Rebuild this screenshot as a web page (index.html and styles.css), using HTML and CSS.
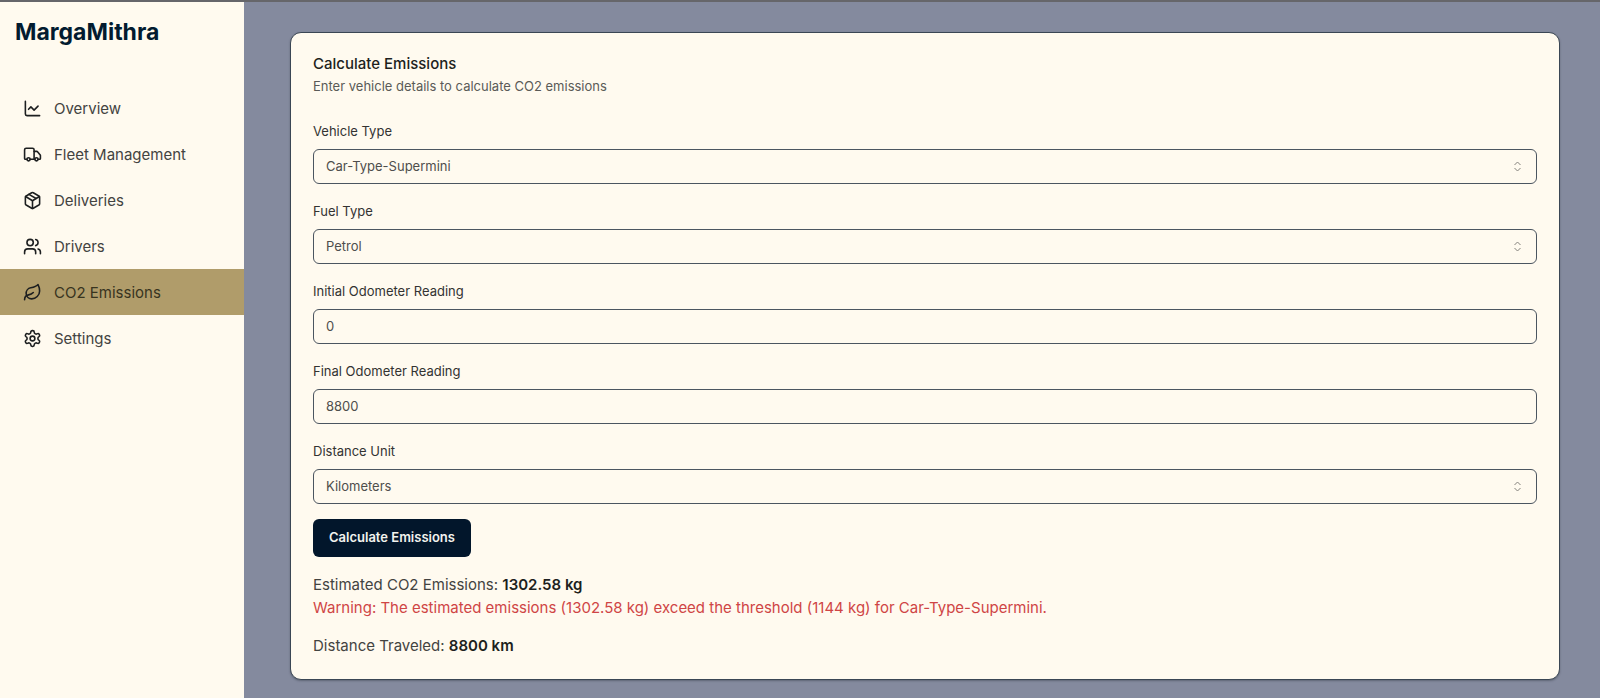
FILE: index.html
```html
<!DOCTYPE html>
<html lang="en">
<head>
<meta charset="utf-8">
<meta name="viewport" content="width=device-width, initial-scale=1">
<title>MargaMithra</title>
<link rel="stylesheet" href="styles.css">
</head>
<body>
<div class="app">
  <aside class="sidebar">
    <h1 class="brand">MargaMithra</h1>
    <nav class="nav" aria-label="Main">
      <a class="nav-link" href="#overview">
        <svg class="icon" viewBox="0 0 24 24" aria-hidden="true"><path d="M3 3v16a2 2 0 0 0 2 2h16"/><path d="m7 13 3-3 4 4 5-5"/></svg>
        Overview
      </a>
      <a class="nav-link" href="#fleet">
        <svg class="icon" viewBox="0 0 24 24" aria-hidden="true"><path d="M14 18V6a2 2 0 0 0-2-2H4a2 2 0 0 0-2 2v11a1 1 0 0 0 1 1h2"/><path d="M15 18H9"/><path d="M19 18h2a1 1 0 0 0 1-1v-3.650a1 1 0 0 0-.22-.624l-3.480-4.350A1 1 0 0 0 17.520 8H14"/><circle cx="17" cy="18" r="2"/><circle cx="7" cy="18" r="2"/></svg>
        Fleet Management
      </a>
      <a class="nav-link" href="#deliveries">
        <svg class="icon" viewBox="0 0 24 24" aria-hidden="true"><path d="M11 21.730a2 2 0 0 0 2 0l7-4A2 2 0 0 0 21 16V8a2 2 0 0 0-1-1.730l-7-4a2 2 0 0 0-2 0l-7 4A2 2 0 0 0 3 8v8a2 2 0 0 0 1 1.730z"/><path d="M12 22V12"/><path d="m3.300 7 7.703 4.734a2 2 0 0 0 1.994 0L20.700 7"/><path d="m7.500 4.270 9 5.150"/></svg>
        Deliveries
      </a>
      <a class="nav-link" href="#drivers">
        <svg class="icon" viewBox="0 0 24 24" aria-hidden="true"><path d="M16 21v-2a4 4 0 0 0-4-4H6a4 4 0 0 0-4 4v2"/><circle cx="9" cy="7" r="4"/><path d="M22 21v-2a4 4 0 0 0-3-3.870"/><path d="M16 3.130a4 4 0 0 1 0 7.750"/></svg>
        Drivers
      </a>
      <a class="nav-link nav-link-active" href="#emissions" aria-current="page">
        <svg class="icon" viewBox="0 0 24 24" aria-hidden="true"><path d="M11 20A7 7 0 0 1 9.800 6.100C15.500 5 17 4.480 19 2c1 2 2 4.180 2 8 0 5.500-4.780 10-10 10Z"/><path d="M2 21c0-3 1.850-5.360 5.080-6C9.500 14.520 12 13 13 12"/></svg>
        CO2 Emissions
      </a>
      <a class="nav-link" href="#settings">
        <svg class="icon" viewBox="0 0 24 24" aria-hidden="true"><path d="M12.220 2h-.44a2 2 0 0 0-2 2v.18a2 2 0 0 1-1 1.730l-.43.25a2 2 0 0 1-2 0l-.15-.08a2 2 0 0 0-2.730.73l-.22.38a2 2 0 0 0 .73 2.730l.15.1a2 2 0 0 1 1 1.720v.51a2 2 0 0 1-1 1.740l-.15.09a2 2 0 0 0-.73 2.730l.22.38a2 2 0 0 0 2.730.73l.15-.08a2 2 0 0 1 2 0l.43.25a2 2 0 0 1 1 1.730V20a2 2 0 0 0 2 2h.44a2 2 0 0 0 2-2v-.18a2 2 0 0 1 1-1.730l.43-.25a2 2 0 0 1 2 0l.15.08a2 2 0 0 0 2.730-.73l.22-.39a2 2 0 0 0-.73-2.730l-.15-.08a2 2 0 0 1-1-1.740v-.5a2 2 0 0 1 1-1.740l.15-.09a2 2 0 0 0 .73-2.730l-.22-.38a2 2 0 0 0-2.730-.73l-.15.08a2 2 0 0 1-2 0l-.43-.25a2 2 0 0 1-1-1.730V4a2 2 0 0 0-2-2z"/><circle cx="12" cy="12" r="3"/></svg>
        Settings
      </a>
    </nav>
  </aside>
  <main class="main">
    <section class="card">
      <header class="card-header">
        <h2 class="card-title">Calculate Emissions</h2>
        <p class="card-subtitle">Enter vehicle details to calculate CO2 emissions</p>
      </header>
      <form class="form">
        <div class="field">
          <label class="label" for="vehicle">Vehicle Type</label>
          <div class="select-box">
            <select class="control" id="vehicle"><option>Car-Type-Supermini</option></select>
            <svg class="caret" viewBox="0 0 15 15" aria-hidden="true"><path d="M4.500 6 7.500 3l3 3M4.500 9l3 3 3-3"/></svg>
          </div>
        </div>
        <div class="field">
          <label class="label" for="fuel">Fuel Type</label>
          <div class="select-box">
            <select class="control" id="fuel"><option>Petrol</option></select>
            <svg class="caret" viewBox="0 0 15 15" aria-hidden="true"><path d="M4.500 6 7.500 3l3 3M4.500 9l3 3 3-3"/></svg>
          </div>
        </div>
        <div class="field">
          <label class="label" for="initial">Initial Odometer Reading</label>
          <input class="control" id="initial" type="text" inputmode="numeric" value="0">
        </div>
        <div class="field">
          <label class="label" for="final">Final Odometer Reading</label>
          <input class="control" id="final" type="text" inputmode="numeric" value="8800">
        </div>
        <div class="field">
          <label class="label" for="unit">Distance Unit</label>
          <div class="select-box">
            <select class="control" id="unit"><option>Kilometers</option></select>
            <svg class="caret" viewBox="0 0 15 15" aria-hidden="true"><path d="M4.500 6 7.500 3l3 3M4.500 9l3 3 3-3"/></svg>
          </div>
        </div>
        <button class="submit" type="button">Calculate Emissions</button>
      </form>
      <div class="results">
        <div>
          <p class="result">Estimated CO2 Emissions: <strong>1302.58 kg</strong></p>
          <p class="result warning">Warning: The estimated emissions (1302.58 kg) exceed the threshold (1144 kg) for Car-Type-Supermini.</p>
        </div>
        <p class="result">Distance Traveled: <strong>8800 km</strong></p>
      </div>
    </section>
  </main>
</div>
</body>
</html>
```
FILE: styles.css
```css
* {
  box-sizing: border-box;
}

body,
h1,
h2,
p {
  margin: 0;
}

body {
  font-family: Inter, "Liberation Sans", sans-serif;
  font-size: 15px;
  color: #434341;
  background: #848a9e;
}

.app {
  display: flex;
  min-height: 100vh;
  border-top: 2px solid #66666a;
}

.sidebar {
  flex: none;
  width: 244px;
  background: #fffaef;
}

.brand {
  padding: 15px 15px 38px;
  font-size: 23px;
  line-height: 30px;
  font-weight: 700;
  color: #021b30;
}

.nav {
  display: flex;
  flex-direction: column;
}

.nav-link {
  display: flex;
  align-items: center;
  gap: 12px;
  height: 46px;
  padding: 0 23px;
  color: #434341;
  text-decoration: none;
}

.nav-link-active {
  background: #b09c6a;
  color: #38341f;
}

.icon {
  width: 19px;
  height: 19px;
  fill: none;
  stroke: #1d1f20;
  stroke-width: 2;
  stroke-linecap: round;
  stroke-linejoin: round;
}

.main {
  flex: 1;
  min-width: 0;
  padding: 30px 40px 18px 46px;
}

.card {
  padding: 22px;
  border: 1px solid #3a4654;
  border-radius: 11px;
  background: #fffaef;
  box-shadow: 0 1px 2px rgba(40, 50, 60, 0.4);
}

.card-header {
  margin-bottom: 23px;
}

.card-title {
  font-size: 15px;
  line-height: 18px;
  font-weight: 500;
  color: #1d1f20;
}

.card-subtitle {
  margin-top: 3px;
  font-size: 13px;
  line-height: 20px;
  color: #5a5a57;
}

.form {
  display: flex;
  flex-direction: column;
  align-items: stretch;
  gap: 15px;
}

.field {
  display: flex;
  flex-direction: column;
  gap: 6px;
}

.label {
  font-size: 13px;
  line-height: 24px;
  color: #333332;
}

.select-box {
  position: relative;
  display: flex;
}

.control {
  appearance: none;
  width: 100%;
  height: 35px;
  padding: 0 12px 2px;
  border: 1px solid #4b5560;
  border-radius: 6px;
  background: transparent;
  font-family: inherit;
  font-size: 13px;
  color: #4e4e4c;
}

.caret {
  position: absolute;
  top: 10px;
  right: 12px;
  width: 15px;
  height: 15px;
  fill: none;
  stroke: #85837d;
  stroke-width: 1;
  pointer-events: none;
}

.submit {
  align-self: flex-start;
  height: 38px;
  padding: 0 16px 2px;
  border: 0;
  border-radius: 6px;
  background: #02162b;
  font-family: inherit;
  font-size: 13px;
  font-weight: 600;
  color: #f3f3ee;
}

.results {
  display: flex;
  flex-direction: column;
  gap: 15px;
  margin-top: 16px;
}

.result {
  line-height: 23px;
}

.result strong {
  font-weight: 600;
  color: #1d1f20;
}

.warning {
  color: #cf4545;
}
```
